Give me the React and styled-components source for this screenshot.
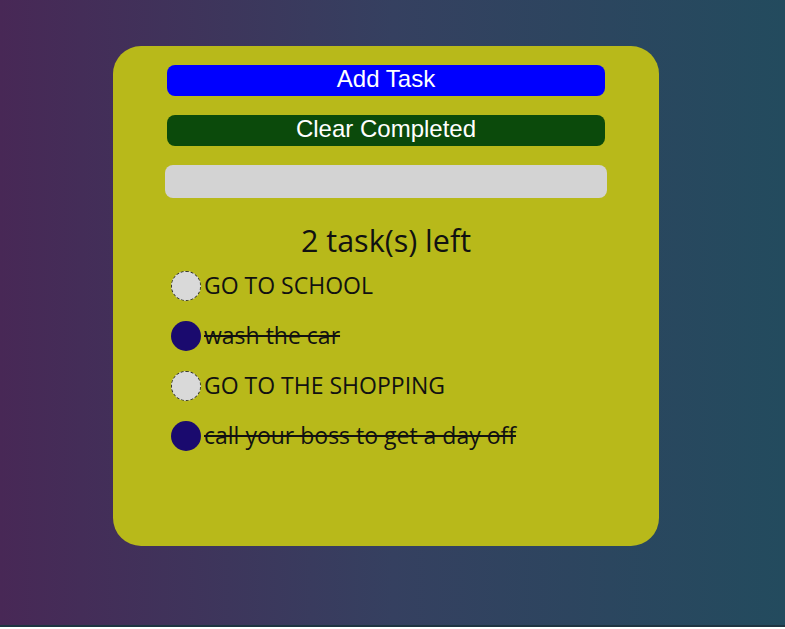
import React, { useState } from 'react';
import styled, { createGlobalStyle } from 'styled-components';

const GlobalStyle = createGlobalStyle`
  html, body {
    margin: 0;
    padding: 0;
  }
`;

const initialTasks = [
  { id: 1, text: 'GO TO SCHOOL', done: false },
  { id: 2, text: 'wash the car', done: true },
  { id: 3, text: 'GO TO THE SHOPPING', done: false },
  { id: 4, text: 'call your boss to get a day off', done: true },
];

function App() {
  const [tasks, setTasks] = useState(initialTasks);
  const left = tasks.filter((t) => !t.done).length;

  const toggle = (id) =>
    setTasks(tasks.map((t) => (t.id === id ? { ...t, done: !t.done } : t)));

  return (
    <Page>
      <GlobalStyle />
      <Card>
        <ActionButton $bg='#0000ff'>Add Task</ActionButton>
        <ActionButton $bg='#0b4a0b' onClick={() => setTasks(tasks.filter((t) => !t.done))}>
          Clear Completed
        </ActionButton>
        <Input />
        <Counter>{left} task(s) left</Counter>
        <List>
          {tasks.map((task) => (
            <Row key={task.id}>
              <Check $done={task.done} onClick={() => toggle(task.id)} />
              <Label $done={task.done}>{task.text}</Label>
            </Row>
          ))}
        </List>
      </Card>
    </Page>
  );
}

const Page = styled.div`
  box-sizing: border-box;
  min-height: 627px;
  padding: 46px 0 0 113px;
  background: linear-gradient(to right, #482856, #354060 50%, #234b5e);
  border-bottom: 2px solid #1f3542;
`;

const Card = styled.div`
  box-sizing: border-box;
  width: 546px;
  height: 500px;
  padding-top: 19px;
  border-radius: 28px;
  background-color: #b8b91a;
  display: flex;
  flex-direction: column;
  align-items: center;
`;

const ActionButton = styled.button`
  width: 438px;
  height: 31px;
  margin-bottom: 19px;
  border: none;
  border-radius: 8px;
  background-color: ${(p) => p.$bg};
  color: #ffffff;
  font-family: 'Liberation Sans', Arial, sans-serif;
  font-size: 24px;
  line-height: 27px;
  padding: 0 0 4px;
  cursor: pointer;
`;

const Input = styled.input`
  box-sizing: border-box;
  width: 442px;
  height: 33px;
  border: none;
  border-radius: 8px;
  background-color: #d3d3d3;
  outline: none;
`;

const Counter = styled.div`
  margin-top: 23px;
  font-family: 'Open Sans', 'Noto Sans', sans-serif;
  font-size: 30.5px;
  line-height: 38px;
  color: #111;
`;

const List = styled.div`
  align-self: stretch;
  padding-left: 58px;
  margin-top: 12px;
  display: flex;
  flex-direction: column;
  gap: 20px;
`;

const Row = styled.div`
  display: flex;
  align-items: center;
  height: 30px;
  gap: 3px;
`;

const Check = styled.span`
  box-sizing: border-box;
  width: 30px;
  height: 30px;
  border-radius: 50%;
  flex-shrink: 0;
  background-color: ${(p) => (p.$done ? '#1a0a6e' : '#d9d9d9')};
  border: ${(p) => (p.$done ? 'none' : '1px dashed #333')};
  cursor: pointer;
`;

const Label = styled.span`
  font-family: 'Open Sans', 'Noto Sans', sans-serif;
  font-size: 23px;
  line-height: 30px;
  margin-top: -2px;
  color: #111;
  text-decoration: ${(p) => (p.$done ? 'line-through' : 'none')};
  text-decoration-thickness: 2px;
`;

export default App;
